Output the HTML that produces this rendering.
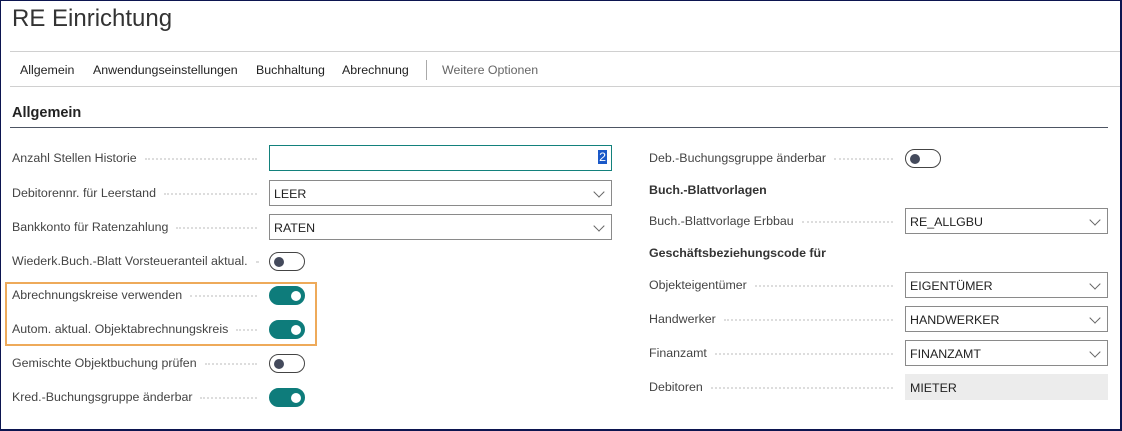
<!DOCTYPE html>
<html><head><meta charset="utf-8"><style>
*{box-sizing:border-box;margin:0;padding:0}
body{width:1122px;height:431px;background:#fff;font-family:"Segoe UI","Liberation Sans",sans-serif;color:#333;position:relative;overflow:hidden}
.frame{position:absolute;left:0;top:0;width:1122px;height:431px;border:1px solid #0c1550;border-right-width:2px;border-bottom-width:2px}
.a{position:absolute}
.title{left:12px;top:5px;font-size:24px;font-weight:300;color:#333}
.hl{height:1px;background:#d0d0d0;left:10px;right:2px}
.nav{top:63px;font-size:12.4px;color:#222}
.row{position:absolute;display:flex;align-items:center;height:18px;font-size:12.4px;color:#444;white-space:nowrap}
.row i{flex:1;border-bottom:2px dotted #ddd;margin:2px 0 0 8px;height:1px}
.inp{border:1px solid #8a8a8a;height:26px;font-size:12.4px;padding:6px 4px;color:#222;background:#fff}
.chev{position:absolute;right:8px;top:7px;width:8px;height:8px;border-right:1px solid #666;border-bottom:1px solid #666;transform:rotate(45deg)}
.tg{width:36px;height:19px;border-radius:10px;border:1px solid #444;background:#fff}
.tg::after{content:"";position:absolute;left:4px;top:4px;width:10px;height:10px;border-radius:50%;background:#444a5c}
.tg.on{background:#0e7c7b;border-color:#0e7c7b}
.tg.on::after{left:21px;background:#fff}
.hd{font-size:12.4px;font-weight:600;color:#333}
</style></head><body>
<div class="a title">RE Einrichtung</div>
<div class="a hl" style="top:51px"></div>
<div class="a hl" style="top:86px"></div>
<div class="a nav" style="left:20px">Allgemein</div>
<div class="a nav" style="left:93px">Anwendungseinstellungen</div>
<div class="a nav" style="left:256px">Buchhaltung</div>
<div class="a nav" style="left:342px">Abrechnung</div>
<div class="a" style="left:426px;top:60px;width:1px;height:20px;background:#aaa"></div>
<div class="a nav" style="left:442px;color:#666">Weitere Optionen</div>
<div class="a" style="left:12px;top:105px;font-size:14.5px;font-weight:600;color:#222">Allgemein</div>
<div class="a" style="left:10px;top:127px;width:1098px;height:1px;background:#4d5563"></div>

<div class="row" style="left:12px;top:149px;width:245px">Anzahl Stellen Historie<i></i></div>
<div class="a inp" style="left:269px;top:145px;width:343px;border:1px solid #13817c"><span style="position:absolute;right:4px;top:4px;background:#1a58c8;color:#fff;padding:0 1px">2</span></div>
<div class="row" style="left:12px;top:184px;width:245px">Debitorennr. für Leerstand<i></i></div>
<div class="a inp" style="left:269px;top:180px;width:343px">LEER<span class="chev"></span></div>
<div class="row" style="left:12px;top:218px;width:245px">Bankkonto für Ratenzahlung<i></i></div>
<div class="a inp" style="left:269px;top:214px;width:343px">RATEN<span class="chev"></span></div>
<div class="row" style="left:12px;top:252px;width:245px">Wiederk.Buch.-Blatt Vorsteueranteil aktual.<i></i></div>
<div class="a tg" style="left:269px;top:252px"></div>
<div class="a" style="left:5px;top:282px;width:312px;height:64px;border:2px solid #eeaa5a"></div>
<div class="row" style="left:12px;top:286px;width:245px">Abrechnungskreise verwenden<i></i></div>
<div class="a tg on" style="left:269px;top:286px"></div>
<div class="row" style="left:12px;top:320px;width:245px">Autom. aktual. Objektabrechnungskreis<i></i></div>
<div class="a tg on" style="left:269px;top:320px"></div>
<div class="row" style="left:12px;top:354px;width:245px">Gemischte Objektbuchung prüfen<i></i></div>
<div class="a tg" style="left:269px;top:354px"></div>
<div class="row" style="left:12px;top:388px;width:245px">Kred.-Buchungsgruppe änderbar<i></i></div>
<div class="a tg on" style="left:269px;top:388px"></div>

<div class="row" style="left:649px;top:149px;width:244px">Deb.-Buchungsgruppe änderbar<i></i></div>
<div class="a tg" style="left:905px;top:149px"></div>
<div class="a hd" style="left:649px;top:183px">Buch.-Blattvorlagen</div>
<div class="row" style="left:649px;top:212px;width:244px">Buch.-Blattvorlage Erbbau<i></i></div>
<div class="a inp" style="left:905px;top:208px;width:203px">RE_ALLGBU<span class="chev"></span></div>
<div class="a hd" style="left:649px;top:246px">Geschäftsbeziehungscode für</div>
<div class="row" style="left:649px;top:276px;width:244px">Objekteigentümer<i></i></div>
<div class="a inp" style="left:905px;top:272px;width:203px">EIGENTÜMER<span class="chev"></span></div>
<div class="row" style="left:649px;top:310px;width:244px">Handwerker<i></i></div>
<div class="a inp" style="left:905px;top:306px;width:203px">HANDWERKER<span class="chev"></span></div>
<div class="row" style="left:649px;top:344px;width:244px">Finanzamt<i></i></div>
<div class="a inp" style="left:905px;top:340px;width:203px">FINANZAMT<span class="chev"></span></div>
<div class="row" style="left:649px;top:378px;width:244px">Debitoren<i></i></div>
<div class="a inp" style="left:905px;top:374px;width:203px;background:#ececec;border-color:#ececec">MIETER</div>
<div class="frame"></div>
</body></html>
